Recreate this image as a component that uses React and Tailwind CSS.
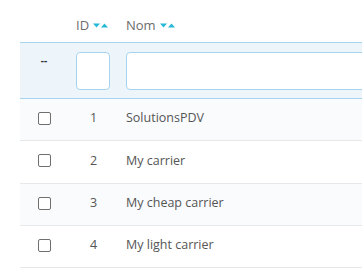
const rows = [
  { id: 1, name: "SolutionsPDV", h: "h-[42px]" },
  { id: 2, name: "My carrier", h: "h-[43px]" },
  { id: 3, name: "My cheap carrier", h: "h-[42px]" },
  { id: 4, name: "My light carrier", h: "h-[42px]" },
];

function SortArrows() {
  return (
    <span className="inline-flex items-center gap-[1px] ml-[4px]">
      <svg width="7" height="5" viewBox="0 0 7 5">
        <path d="M0 0.5H7L3.5 4.5Z" fill="#25b9d7" />
      </svg>
      <svg width="7" height="5" viewBox="0 0 7 5">
        <path d="M0 4.5H7L3.5 0.5Z" fill="#25b9d7" />
      </svg>
    </span>
  );
}

export default function App() {
  return (
    <div className="w-[362px] h-[278px] bg-white overflow-hidden pl-[20px] text-[12.5px]" style={{ fontFamily: '"Open Sans", sans-serif' }}>
      <div className="w-[400px]">
        {/* header */}
        <div className="grid grid-cols-[48px_50px_1fr] h-[42px] items-center pt-[9px] text-[#6c6c6c] text-[13px]">
          <div></div>
          <div className="pl-[8px] flex items-center">ID<SortArrows /></div>
          <div className="pl-[8px] flex items-center">Nom<SortArrows /></div>
        </div>
        {/* filters */}
        <div className="grid grid-cols-[48px_50px_1fr] items-center h-[57px] bg-[#edf5fb] border-y border-[#a6d4ee]">
          <div className="text-center text-[10px] text-[#333] -mt-[21px] font-bold">--</div>
          <div className="px-[8px]">
            <div className="w-[34px] h-[38px] bg-white border border-[#a6d4ee] rounded-[4px]"></div>
          </div>
          <div className="pl-[8px]">
            <div className="h-[38px] bg-white border border-[#a6d4ee] rounded-[4px]"></div>
          </div>
        </div>
        {/* rows */}
        {rows.map((r, i) => (
          <div
            key={r.id}
            className={`grid grid-cols-[48px_50px_1fr] items-center ${r.h} border-b border-[#e6e8eb] text-[#555] ${i % 2 === 0 ? "bg-[#fafbfd]" : "bg-white"}`}
          >
            <div className="flex justify-center -mt-[3px] pl-[1px]">
              <div className="w-[13px] h-[13px] border border-[#6f6f6f] rounded-[2px] bg-white"></div>
            </div>
            <div className="text-center -mt-[2px] pl-[1px]">{r.id}</div>
            <div className="pl-[8px] -mt-[2px]">{r.name}</div>
          </div>
        ))}
      </div>
    </div>
  );
}
